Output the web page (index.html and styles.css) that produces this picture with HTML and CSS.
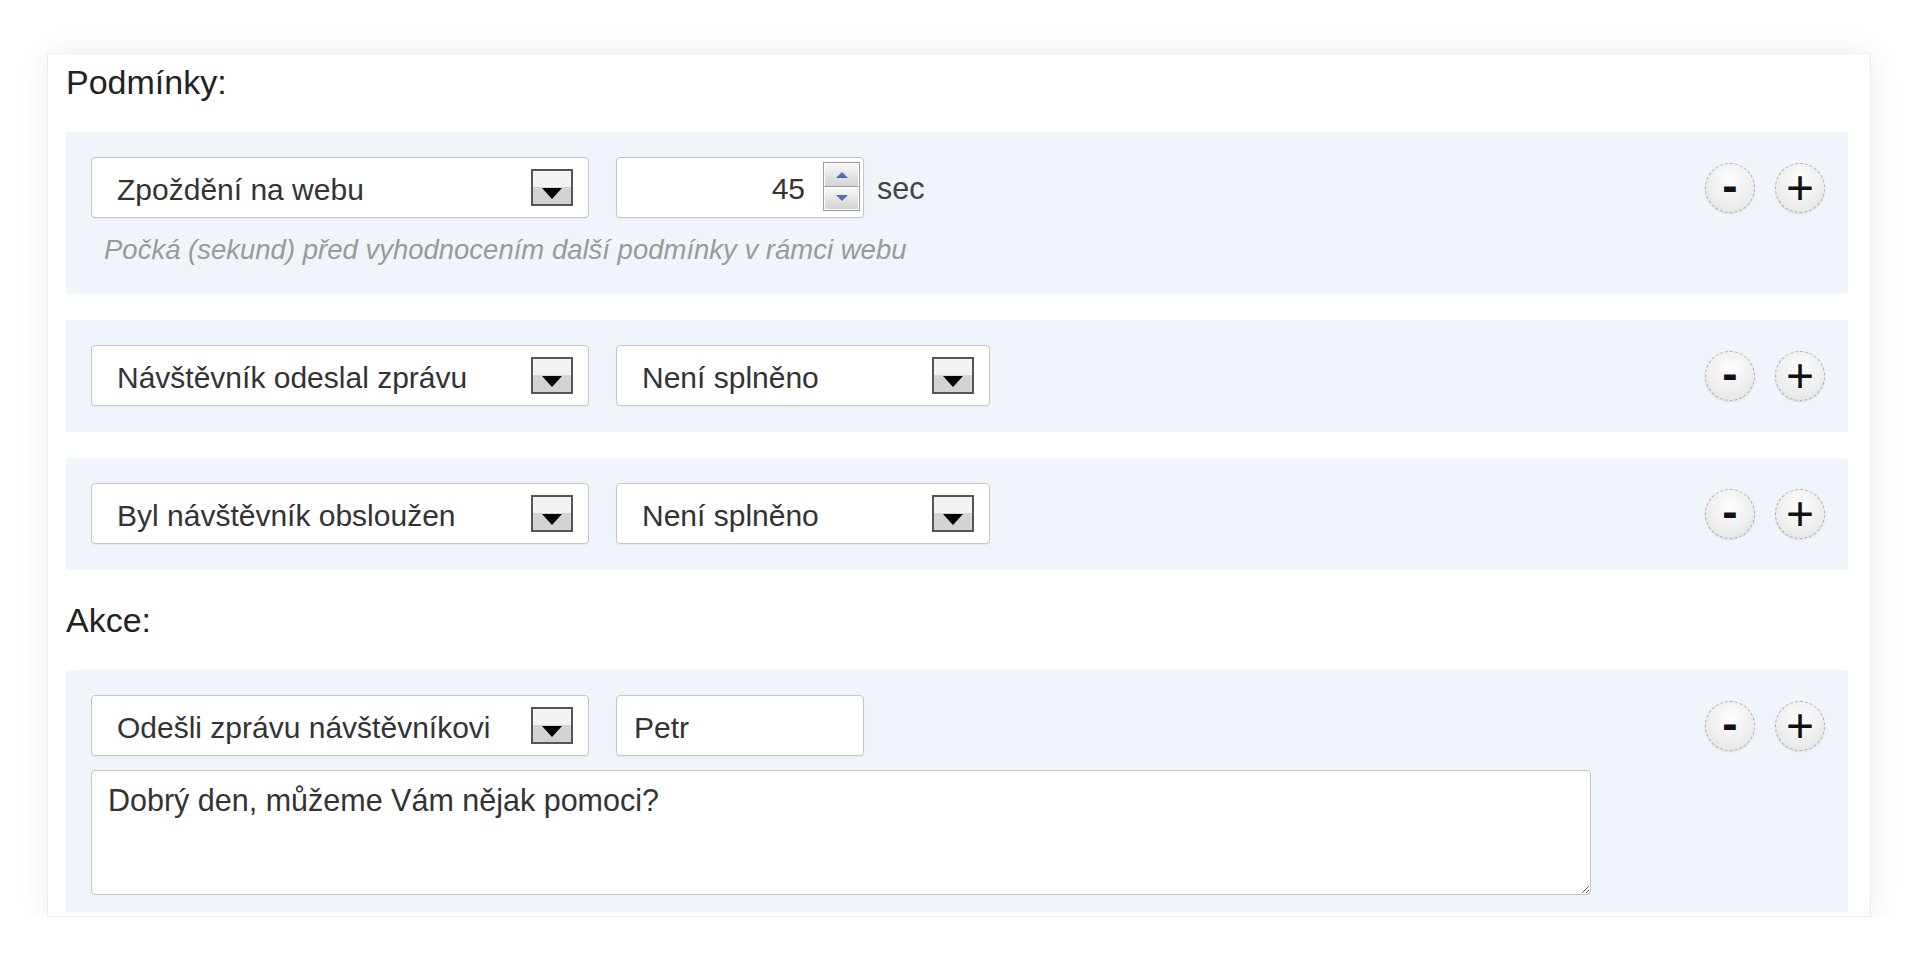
FILE: index.html
```html
<!DOCTYPE html>
<html lang="cs">
<head>
  <meta charset="UTF-8">
  <meta name="viewport" content="width=device-width, initial-scale=1.0">
  <title>Pravidla</title>
  <link rel="stylesheet" href="styles.css">
</head>
<body>
  <div class="card">
    <h3 class="section-title">Podmínky:</h3>

    <!-- Podmínka: zpoždění -->
    <div class="rule">
      <div class="rule-body">
        <div class="fields">
          <div class="select select-wide"><span class="select-text">Zpoždění na webu</span><span class="select-arrow"></span></div>
          <div class="field-group">
            <div class="number-input">
              <span class="number-value">45</span>
              <span class="spinner"><span class="spin spin-up"></span><span class="spin spin-down"></span></span>
            </div>
            <span class="unit">sec</span>
          </div>
        </div>
        <div class="hint">Počká (sekund) před vyhodnocením další podmínky v rámci webu</div>
      </div>
      <div class="rule-buttons">
        <button class="round-btn minus">-</button>
        <button class="round-btn">+</button>
      </div>
    </div>

    <div class="rule">
      <div class="rule-body">
        <div class="fields">
          <div class="select select-wide"><span class="select-text">Návštěvník odeslal zprávu</span><span class="select-arrow"></span></div>
          <div class="select select-narrow"><span class="select-text">Není splněno</span><span class="select-arrow"></span></div>
        </div>
      </div>
      <div class="rule-buttons">
        <button class="round-btn minus">-</button>
        <button class="round-btn">+</button>
      </div>
    </div>

    <div class="rule">
      <div class="rule-body">
        <div class="fields">
          <div class="select select-wide"><span class="select-text">Byl návštěvník obsloužen</span><span class="select-arrow"></span></div>
          <div class="select select-narrow"><span class="select-text">Není splněno</span><span class="select-arrow"></span></div>
        </div>
      </div>
      <div class="rule-buttons">
        <button class="round-btn minus">-</button>
        <button class="round-btn">+</button>
      </div>
    </div>

    <h3 class="section-title section-actions">Akce:</h3>

    <!-- Akce: odeslání zprávy -->
    <div class="rule rule-last">
      <div class="rule-body">
        <div class="fields">
          <div class="select select-wide"><span class="select-text">Odešli zprávu návštěvníkovi</span><span class="select-arrow"></span></div>
          <div class="text-input">Petr</div>
        </div>
        <textarea class="message">Dobrý den, můžeme Vám nějak pomoci?</textarea>
      </div>
      <div class="rule-buttons">
        <button class="round-btn minus">-</button>
        <button class="round-btn">+</button>
      </div>
    </div>
  </div>
</body>
</html>
```

FILE: styles.css
```css
body {
  margin: 0;
  padding: 53px 49px 0 47px;
  background-color: #fff;
  font-family: Arial, "Liberation Sans", sans-serif;
  color: #333;
}
.card {
  background-color: #fff;
  border: 1px solid #ececec;
  box-shadow: 0 0 30px rgba(0, 0, 0, 0.08);
  padding: 8px 22px 4px 18px;
}
.section-title {
  margin: 0 0 30px;
  font-size: 34px;
  font-weight: normal;
  line-height: 40px;
  color: #222;
}
.section-actions {
  margin-top: 30px;
}
.rule {
  display: flex;
  justify-content: space-between;
  align-items: flex-start;
  background-color: #eff5fb;
  padding: 25px 23px 26px 25px;
  margin-bottom: 26px;
}
.rule-last {
  padding-bottom: 17px;
  margin-bottom: 0;
}
.rule-body {
  display: flex;
  flex-direction: column;
}
.fields {
  display: flex;
  align-items: center;
  gap: 27px;
}
.field-group {
  display: flex;
  align-items: center;
  gap: 13px;
}
.select,
.number-input,
.text-input {
  box-sizing: border-box;
  height: 61px;
  background-color: #fff;
  border: 1px solid #c6c6c6;
  border-radius: 4px;
  box-shadow: 0 1px 1px rgba(0, 0, 0, 0.05);
  font-size: 30px;
  color: #333;
}
.select {
  display: flex;
  align-items: center;
  justify-content: space-between;
  padding: 0 15px 0 25px;
}
.select-wide {
  width: 498px;
}
.select-narrow {
  width: 374px;
}
.select-text {
  padding-top: 5px;
}
/* Šipka rozbalovacího seznamu */
.select-arrow {
  box-sizing: border-box;
  width: 42px;
  height: 37px;
  border: 2px solid #555;
  background: linear-gradient(#f3f3f3 48%, #d3d3d3 48%);
  display: flex;
  justify-content: center;
  align-items: flex-end;
  padding-bottom: 5px;
}
.select-arrow::after {
  content: "";
  border-left: 10px solid transparent;
  border-right: 10px solid transparent;
  border-top: 11px solid #000;
}
.number-input {
  width: 248px;
  display: flex;
  align-items: center;
  justify-content: flex-end;
  gap: 18px;
  padding: 0 3px 2px 10px;
}
.number-value {
  padding-top: 5px;
}
.spinner {
  box-sizing: border-box;
  width: 37px;
  height: 49px;
  border: 1px solid #9c9c9c;
  display: flex;
  flex-direction: column;
}
.spin {
  flex: 1;
  display: flex;
  justify-content: center;
  align-items: center;
  background: linear-gradient(#f7f7f7, #d4d4d4);
  border: 1px solid #fff;
}
.spin-up {
  border-bottom: 1px solid #9c9c9c;
}
.spin-up::after {
  content: "";
  border-left: 6px solid transparent;
  border-right: 6px solid transparent;
  border-bottom: 6px solid #4f6fb8;
}
.spin-down::after {
  content: "";
  border-left: 6px solid transparent;
  border-right: 6px solid transparent;
  border-top: 6px solid #4f6fb8;
}
.unit {
  font-size: 30.5px;
  color: #444;
  padding-top: 2px;
}
.text-input {
  width: 248px;
  display: flex;
  align-items: center;
  padding: 5px 0 0 17px;
}
.hint {
  margin: 14px 0 0 13px;
  font-size: 27.5px;
  line-height: 36px;
  font-style: italic;
  color: #9a9a9a;
}
.message {
  box-sizing: border-box;
  width: 1500px;
  height: 125px;
  margin: 14px 0 0;
  padding: 11px 16px;
  border: 1px solid #c6c6c6;
  border-radius: 4px;
  font-family: Arial, "Liberation Sans", sans-serif;
  font-size: 30.5px;
  line-height: 36px;
  color: #333;
  resize: both;
}
/* Tlačítka - a + */
.rule-buttons {
  display: flex;
  align-items: center;
  gap: 20px;
  height: 61px;
}
.round-btn {
  box-sizing: border-box;
  width: 50px;
  height: 50px;
  padding: 0;
  border: 1px dashed #aaa;
  border-radius: 50%;
  background: radial-gradient(circle at 50% 35%, #fefefe, #e2e2e2);
  box-shadow: 0 1px 2px rgba(0, 0, 0, 0.1);
  font-family: Arial, "Liberation Sans", sans-serif;
  font-size: 48px;
  line-height: 1;
  color: #111;
  display: flex;
  justify-content: center;
  align-items: center;
  cursor: pointer;
}
.round-btn.minus {
  font-weight: bold;
  font-size: 46px;
  padding-bottom: 5px;
}
```
